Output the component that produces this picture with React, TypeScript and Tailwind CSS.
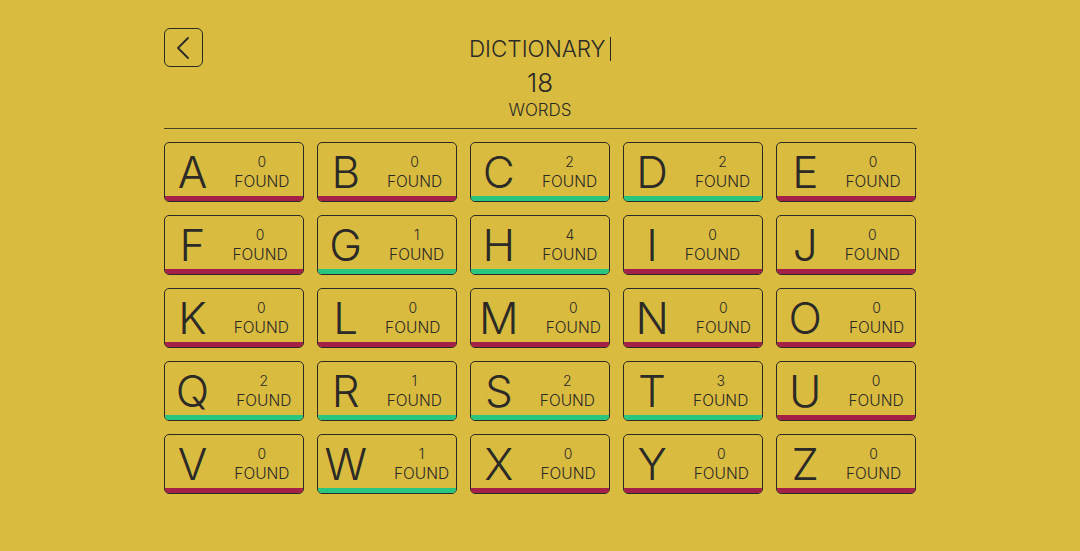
import React from 'react';

const letters: [string, number][] = [
  ['A', 0], ['B', 0], ['C', 2], ['D', 2], ['E', 0],
  ['F', 0], ['G', 1], ['H', 4], ['I', 0], ['J', 0],
  ['K', 0], ['L', 0], ['M', 0], ['N', 0], ['O', 0],
  ['Q', 2], ['R', 1], ['S', 2], ['T', 3], ['U', 0],
  ['V', 0], ['W', 1], ['X', 0], ['Y', 0], ['Z', 0],
];

const LetterCard = ({ letter, found }: { letter: string; found: number }) => (
  <button className="h-[60px] flex flex-col border border-[#2b2a26] rounded-[5px] overflow-hidden text-[#2b2a26]">
    <div className="flex-1 flex items-center justify-center gap-[27px]">
      <span className="text-[44px] leading-none pt-[5px]">{letter}</span>
      <div className="flex flex-col items-center pt-[4px]">
        <span className="text-[14px] leading-[20px]">{found}</span>
        <span className="text-[15.5px] leading-[20px]">FOUND</span>
      </div>
    </div>
    <div className={`h-[5px] ${found > 0 ? 'bg-[#29c680]' : 'bg-[#a52046]'}`} />
  </button>
);

export default function App() {
  const total = letters.reduce((s, [, n]) => s + n, 0);
  return (
    <div
      className="min-h-screen bg-[#d9bb40] text-[#2b2a26] font-light"
      style={{ fontFamily: 'Inter, "Noto Sans", sans-serif' }}
    >
      <div className="w-[753px] mx-auto pt-[28px]">
        <div className="grid grid-cols-[39px_1fr_39px] items-start">
          <button className="w-[39px] h-[39px] border-[1.5px] border-[#2b2a26] rounded-[6px] flex items-center justify-center">
            <svg width="16" height="24" viewBox="0 0 16 24" fill="none">
              <path d="M13 2 L3 12 L13 22" stroke="#2b2a26" strokeWidth="1.8" strokeLinecap="round" strokeLinejoin="round" />
            </svg>
          </button>
          <div className="flex flex-col items-center">
            <div className="mt-[7px] flex items-center h-[28px]">
              <span className="text-[22.5px] leading-[28px]">DICTIONARY</span>
              <span className="ml-[4px] w-[1.5px] h-[24px] bg-[#2b2a26]" />
            </div>
            <span className="text-[26px] leading-[32px] mt-[4px]">{total}</span>
            <span className="text-[17px] leading-[22px]">WORDS</span>
          </div>
          <div />
        </div>
        <div className="mt-[7px] h-px bg-[#4a4322]" />
        <div className="mt-[13px] grid grid-cols-5 gap-[13px]">
          {letters.map(([l, n]) => (
            <LetterCard key={l} letter={l} found={n} />
          ))}
        </div>
      </div>
    </div>
  );
}
